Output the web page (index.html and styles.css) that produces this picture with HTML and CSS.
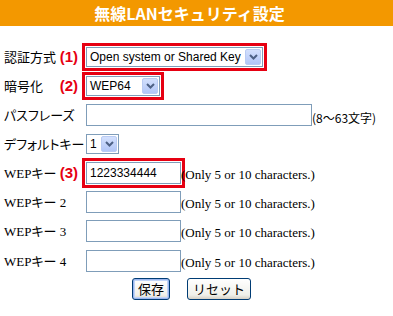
FILE: index.html
```html
<!DOCTYPE html>
<html lang="ja">
<head>
    <meta charset="UTF-8">
    <title>無線LANセキュリティ設定</title>
    <link rel="stylesheet" href="styles.css">
</head>
<body>
    <div class="title">無線LANセキュリティ設定</div>
    <div class="form">
        <div class="row">
            <div class="label">認証方式<span class="num">(1)</span></div>
            <div class="ctrl">
                <div class="select marked wide">
                    <span class="value">Open system or Shared Key</span>
                    <span class="arrow"><svg width="9" height="6" viewBox="0 0 9 6"><path d="M1 1 L4.5 4.5 L8 1" fill="none" stroke="#4d6185" stroke-width="2"/></svg></span>
                </div>
            </div>
        </div>
        <div class="row">
            <div class="label">暗号化<span class="num">(2)</span></div>
            <div class="ctrl">
                <div class="select marked mid">
                    <span class="value">WEP64</span>
                    <span class="arrow"><svg width="9" height="6" viewBox="0 0 9 6"><path d="M1 1 L4.5 4.5 L8 1" fill="none" stroke="#4d6185" stroke-width="2"/></svg></span>
                </div>
            </div>
        </div>
        <div class="row">
            <div class="label">パスフレーズ</div>
            <div class="ctrl">
                <div class="input long"></div>
                <span class="note jp">(8～63文字)</span>
            </div>
        </div>
        <div class="row">
            <div class="label">デフォルトキー</div>
            <div class="ctrl">
                <div class="select small">
                    <span class="value">1</span>
                    <span class="arrow"><svg width="9" height="6" viewBox="0 0 9 6"><path d="M1 1 L4.5 4.5 L8 1" fill="none" stroke="#4d6185" stroke-width="2"/></svg></span>
                </div>
            </div>
        </div>
        <div class="row">
            <div class="label">WEPキー<span class="num">(3)</span></div>
            <div class="ctrl">
                <div class="input key marked">1223334444</div>
                <span class="note">(Only 5 or 10 characters.)</span>
            </div>
        </div>
        <div class="row">
            <div class="label">WEPキー 2</div>
            <div class="ctrl">
                <div class="input key"></div>
                <span class="note">(Only 5 or 10 characters.)</span>
            </div>
        </div>
        <div class="row">
            <div class="label">WEPキー 3</div>
            <div class="ctrl">
                <div class="input key"></div>
                <span class="note">(Only 5 or 10 characters.)</span>
            </div>
        </div>
        <div class="row last">
            <div class="label">WEPキー 4</div>
            <div class="ctrl">
                <div class="input key"></div>
                <span class="note">(Only 5 or 10 characters.)</span>
            </div>
        </div>
        <div class="buttons">
            <button class="btn default">保存</button>
            <button class="btn">リセット</button>
        </div>
    </div>
</body>
</html>
```

FILE: styles.css
```css
body {
    margin: 0;
    padding: 0;
    background-color: #fff;
    font-family: "Liberation Serif", "Noto Sans CJK JP", serif;
    font-size: 13px;
    color: #000;
}
.title {
    height: 26px;
    line-height: 26px;
    background-color: #f39800;
    color: #fff;
    font-family: "Noto Sans CJK JP", sans-serif;
    font-weight: bold;
    font-size: 16px;
    text-align: center;
    padding-right: 14px;
}
.form {
    padding-top: 16px;
}
.row {
    display: flex;
    align-items: center;
    height: 29px;
}
.row.last {
    margin-top: 1px;
}
.label {
    width: 74px;
    margin-left: 4px;
    margin-right: 8px;
    display: flex;
    justify-content: space-between;
    align-items: center;
    white-space: nowrap;
    font-feature-settings: "palt";
}
.num {
    color: #e60012;
    font-family: "Liberation Sans", sans-serif;
    font-weight: bold;
    font-size: 15px;
}
.ctrl {
    display: flex;
    align-items: flex-end;
}
.marked {
    outline: 3px solid #e60012;
    outline-offset: 1px;
}
.select {
    height: 20px;
    box-sizing: border-box;
    border: 1px solid #7f9db9;
    background: #fff;
    display: flex;
    align-items: center;
    justify-content: space-between;
    font-family: "Liberation Sans", sans-serif;
    font-size: 12px;
    padding-left: 3px;
    white-space: nowrap;
    overflow: hidden;
}
.select.wide {
    width: 177px;
}
.select.mid {
    width: 74px;
}
.select.small {
    width: 33px;
}
.arrow {
    flex-shrink: 0;
    width: 16px;
    height: 16px;
    margin-right: 1px;
    box-sizing: border-box;
    border: 1px solid #b9cbf3;
    border-radius: 2px;
    background: linear-gradient(#d3e0fd, #b2c6f7);
    display: flex;
    align-items: center;
    justify-content: center;
}
.input {
    height: 22px;
    box-sizing: border-box;
    border: 1px solid #7f9db9;
    background: #fff;
    font-family: "Liberation Sans", sans-serif;
    font-size: 12px;
    line-height: 20px;
    padding-left: 3px;
}
.input.long {
    width: 226px;
}
.input.key {
    width: 95px;
}
.note {
    line-height: 16px;
    margin-bottom: 1px;
    white-space: nowrap;
}
.note.jp {
    font-family: "Noto Sans CJK JP", sans-serif;
    font-size: 12px;
    margin-bottom: 0;
}
.buttons {
    display: flex;
    justify-content: center;
    gap: 17px;
    margin-top: 3px;
    padding-right: 10px;
}
.btn {
    height: 22px;
    padding: 0 5px;
    border: 1px solid #003c74;
    border-radius: 3px;
    background: linear-gradient(#ffffff, #f0f0ea 80%, #d6d0c5);
    font-family: "Noto Sans CJK JP", sans-serif;
    font-size: 13px;
    line-height: 18px;
    color: #000;
}
.btn.default {
    box-shadow: inset 0 0 0 1px #9ab5ee, inset 0 0 0 2px #c0d4f7;
}
```
